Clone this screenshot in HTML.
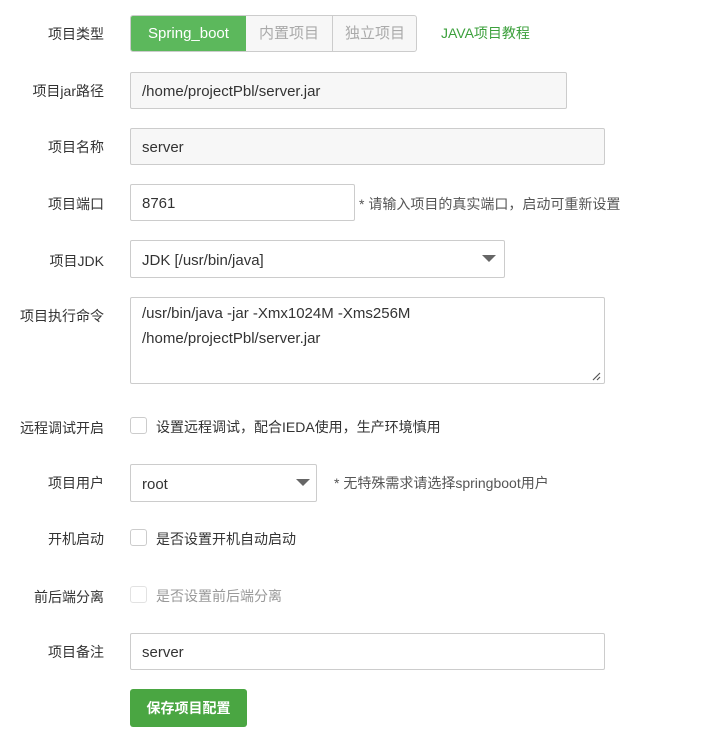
<!DOCTYPE html>
<html><head><meta charset="utf-8"><style>
body{margin:0;width:727px;height:750px;background:#fff;font-family:"Liberation Sans","Noto Sans CJK SC",sans-serif;font-size:14px;color:#333;position:relative;overflow:hidden}
.a{position:absolute;white-space:nowrap}
.lb{position:absolute;right:623px;transform:translateY(-50%);white-space:nowrap;color:#333}
.in{position:absolute;box-sizing:border-box;border:1px solid #ccc;border-radius:2px;background:#fff;padding-left:11px;padding-top:2px;font-size:15px;color:#333;display:flex;align-items:center}
.g{background:#f7f7f7}
.cb{position:absolute;left:130px;width:17px;height:17px;box-sizing:border-box;border:1px solid #ccc;border-radius:3px;background:#fff}
.tri{position:absolute;width:0;height:0;border-left:7px solid transparent;border-right:7px solid transparent;border-top:7px solid #666}
</style></head><body>
<div class="lb" style="top:34px">项目类型</div>
<div class="a" style="left:130px;top:15px;width:287px;height:37px;box-sizing:border-box;border:1px solid #ccc;border-radius:3px;background:#f7f7f7;overflow:hidden">
<div class="a" style="left:0;top:0;width:115px;height:37px;background:#5cb85c;color:#fff;font-size:15px;line-height:36px;text-align:center">Spring_boot</div>
<div class="a" style="left:115px;top:0;width:86px;height:37px;border-right:1px solid #ccc;color:#aaa;font-size:15px;line-height:36px;text-align:center">内置项目</div>
<div class="a" style="left:201px;top:0;width:86px;color:#aaa;font-size:15px;line-height:36px;text-align:center">独立项目</div>
</div>
<div class="a" style="left:441px;top:23px;color:#3ca03c">JAVA项目教程</div>

<div class="lb" style="top:91px">项目jar路径</div>
<div class="in g" style="left:130px;top:72px;width:437px;height:37px">/home/projectPbl/server.jar</div>

<div class="lb" style="top:147px">项目名称</div>
<div class="in g" style="left:130px;top:128px;width:475px;height:37px">server</div>

<div class="lb" style="top:204px">项目端口</div>
<div class="in" style="left:130px;top:184px;width:225px;height:37px">8761</div>
<div class="a" style="left:359px;top:194px;color:#555">* 请输入项目的真实端口，启动可重新设置</div>

<div class="lb" style="top:261px">项目JDK</div>
<div class="in" style="left:130px;top:240px;width:375px;height:38px">JDK [/usr/bin/java]</div>
<div class="tri" style="left:482px;top:255px"></div>

<div class="lb" style="top:316px">项目执行命令</div>
<div class="in" style="left:130px;top:297px;width:475px;height:87px;align-items:flex-start;padding-top:3px;line-height:25px;display:block">/usr/bin/java -jar -Xmx1024M -Xms256M<br>/home/projectPbl/server.jar</div>
<svg class="a" style="left:590px;top:370px" width="12" height="12"><path d="M3 10L10 3M7 10L10 7" stroke="#555" stroke-width="1.2"/></svg>

<div class="lb" style="top:428px">远程调试开启</div>
<div class="cb" style="top:417px"></div>
<div class="a" style="left:156px;top:417px">设置远程调试，配合IEDA使用，生产环境慎用</div>

<div class="lb" style="top:483px">项目用户</div>
<div class="in" style="left:130px;top:464px;width:187px;height:38px">root</div>
<div class="tri" style="left:296px;top:479px"></div>
<div class="a" style="left:334px;top:473px;color:#555">* 无特殊需求请选择springboot用户</div>

<div class="lb" style="top:539px">开机启动</div>
<div class="cb" style="top:529px"></div>
<div class="a" style="left:156px;top:529px">是否设置开机自动启动</div>

<div class="lb" style="top:597px">前后端分离</div>
<div class="cb" style="top:586px;border-color:#e2e2e2"></div>
<div class="a" style="left:156px;top:586px;color:#999">是否设置前后端分离</div>

<div class="lb" style="top:652px">项目备注</div>
<div class="in" style="left:130px;top:633px;width:475px;height:37px">server</div>

<div class="a" style="left:130px;top:689px;width:117px;height:38px;background:#4aa642;border-radius:3px;color:#fff;font-size:14px;line-height:38px;text-align:center;font-weight:bold">保存项目配置</div>
</body></html>
